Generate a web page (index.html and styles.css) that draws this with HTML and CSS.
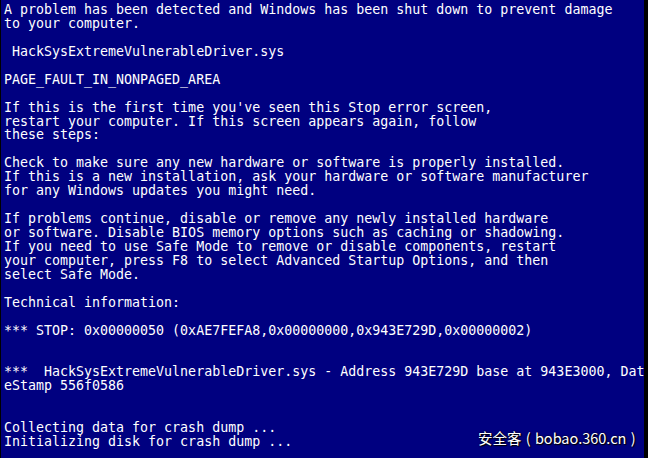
FILE: index.html
```html
<!DOCTYPE html>
<html lang="en">
<head>
    <meta charset="UTF-8">
    <meta name="viewport" content="width=device-width, initial-scale=1.0">
    <title>Stop error</title>
    <link rel="stylesheet" href="styles.css">
</head>
<body>
    <div class="screen">
<pre class="bsod">A problem has been detected and Windows has been shut down to prevent damage
to your computer.

 HackSysExtremeVulnerableDriver.sys

PAGE_FAULT_IN_NONPAGED_AREA

If this is the first time you've seen this Stop error screen,
restart your computer. If this screen appears again, follow
these steps:

Check to make sure any new hardware or software is properly installed.
If this is a new installation, ask your hardware or software manufacturer
for any Windows updates you might need.

If problems continue, disable or remove any newly installed hardware
or software. Disable BIOS memory options such as caching or shadowing.
If you need to use Safe Mode to remove or disable components, restart
your computer, press F8 to select Advanced Startup Options, and then
select Safe Mode.

Technical information:

*** STOP: 0x00000050 (0xAE7FEFA8,0x00000000,0x943E729D,0x00000002)


***  HackSysExtremeVulnerableDriver.sys - Address 943E729D base at 943E3000, Dat
eStamp 556f0586


Collecting data for crash dump ...
Initializing disk for crash dump ...</pre>
        <div class="watermark">安全客 ( bobao.360.cn )</div>
    </div>
</body>
</html>
```

FILE: styles.css
```css
html, body {
    margin: 0;
    padding: 0;
    background-color: #000;
    overflow: hidden;
}

.screen {
    position: relative;
    width: 643px;
    height: 458px;
    margin-left: 1px;
    background-color: #000080;
    box-sizing: border-box;
    padding: 3px 0 0 3px;
}

.bsod {
    margin: 0;
    color: #ffffff;
    font-family: "DejaVu Sans Mono", "Liberation Mono", monospace;
    font-size: 13.3px;
    line-height: 13.93px;
    white-space: pre;
}

.watermark {
    position: absolute;
    left: 477px;
    top: 428px;
    color: #ffffff;
    font-family: "Noto Sans CJK SC", "Noto Sans", sans-serif;
    font-size: 14.5px;
    line-height: 20px;
    word-spacing: 1px;
    text-shadow: 1px 1px 1px #000, 0 0 2px #000;
}
```
